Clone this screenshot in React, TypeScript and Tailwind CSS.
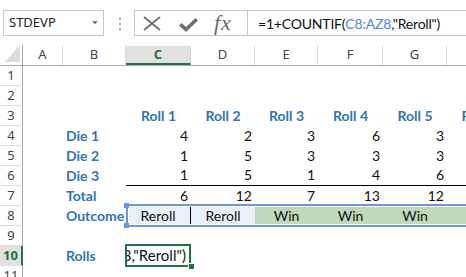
import React from "react";

const W = ["w-[40px]", "w-[63px]", "w-[65px]", "w-[64px]", "w-[63px]", "w-[65px]", "w-[64px]", "w-[64px]"];
const LETTERS = ["A", "B", "C", "D", "E", "F", "G", "H"];

type C = { t?: string; a?: "l" | "r" | "c"; h?: boolean; cls?: string };

const head = (t: string): C => ({ t, a: "c", h: true });
const lab = (t: string): C => ({ t, a: "l", h: true });
const num = (t: string): C => ({ t, a: "r" });

const ROWS: Record<number, C[]> = {
  3: [{}, {}, head("Roll 1"), head("Roll 2"), head("Roll 3"), head("Roll 4"), head("Roll 5"), head("Roll 6")],
  4: [{}, lab("Die 1"), num("4"), num("2"), num("3"), num("6"), num("3"), num("2")],
  5: [{}, lab("Die 2"), num("1"), num("5"), num("3"), num("3"), num("3"), num("4")],
  6: [
    {},
    lab("Die 3"),
    { ...num("1"), cls: "border-b border-black" },
    { ...num("5"), cls: "border-b border-black" },
    { ...num("1"), cls: "border-b border-black" },
    { ...num("4"), cls: "border-b border-black" },
    { ...num("6"), cls: "border-b border-black" },
    { ...num("5"), cls: "border-b border-black" },
  ],
  7: [{}, lab("Total"), num("6"), num("12"), num("7"), num("13"), num("12"), num("11")],
  8: [
    {},
    lab("Outcome"),
    { t: "Reroll", a: "c", cls: "bg-[#eaeffa] border-r border-black" },
    { t: "Reroll", a: "c", cls: "bg-[#eaeffa]" },
    { t: "Win", a: "c", cls: "bg-[#c0d9bb]" },
    { t: "Win", a: "c", cls: "bg-[#c0d9bb]" },
    { t: "Win", a: "c", cls: "bg-[#c0d9bb]" },
    { t: "Win", a: "c", cls: "bg-[#c0d9bb]" },
  ],
  10: [{}, lab("Rolls"), {}, {}, {}, {}, {}, {}],
};

function Cell({ c, i }: { c: C; i: number }) {
  const align = c.a === "r" ? "justify-end pr-[3px]" : c.a === "c" ? "justify-center" : "justify-start pl-[3px]";
  return (
    <div
      className={`${W[i]} shrink-0 h-[20px] flex items-end whitespace-nowrap ${align} ${
        c.h ? "font-bold text-[#2e75b6]" : "text-[#111]"
      } ${c.cls ?? ""}`}
    >
      <span className="leading-[20px]">{c.t ?? ""}</span>
    </div>
  );
}

function Row({ n }: { n: number }) {
  const cells = ROWS[n] ?? [{}, {}, {}, {}, {}, {}, {}, {}];
  const active = n === 10;
  return (
    <div className="relative flex h-[20px] shrink-0">
      <div
        className={`w-[23px] shrink-0 h-[20px] flex items-center justify-center font-['Noto_Sans',sans-serif] text-[13px] border-b border-b-[#dedede] ${
          active
            ? "bg-[#e1e1e1] border-r-2 border-r-[#217346] text-[#217346] font-bold"
            : "border-r border-r-[#ababab] text-[#444]"
        }`}
      >
        {n}
      </div>
      {cells.map((c, i) => (
        <Cell key={i} c={c} i={i} />
      ))}
      {n === 8 && (
        <div className="absolute left-[126px] top-[-2px] h-[23px] right-[-20px] border-2 border-[#6b96e2] shadow-[inset_0_0_0_1px_#ffffff]">
          <div className="absolute left-[-4px] top-[-3px] w-[5px] h-[5px] bg-[#6b96e2]" />
          <div className="absolute left-[-4px] top-[17px] w-[5px] h-[5px] bg-[#6b96e2]" />
        </div>
      )}
      {active && (
        <div className="absolute left-[125px] top-[-2px] w-[66px] h-[23px] border-2 border-[#217346] bg-white">
          <div className="h-full overflow-hidden flex items-end justify-end pr-[3px] whitespace-nowrap text-[#111] text-[15px]">
            <span className="leading-[20px] shrink-0">8,"Reroll")</span>
          </div>
          <div className="absolute left-[61px] top-[17px] w-[7px] h-[7px] bg-[#217346] border border-white" />
        </div>
      )}
    </div>
  );
}

export default function App() {
  return (
    <div className="w-[466px] h-[277px] overflow-hidden bg-white relative font-['Lato',sans-serif] text-[14px]">
      {/* top bar */}
      <div className="h-[45px] flex items-start pt-[10px]">
        <div className="ml-[3px] w-[101px] h-[26px] border border-[#c6c6c6] flex items-center justify-between pl-[5px] pr-[5px] font-['Noto_Sans',sans-serif] text-[13px] text-[#222]">
          <span>STDEVP</span>
          <svg width="6" height="4" viewBox="0 0 6 4">
            <polygon points="0,0 6,0 3,3.5" fill="#7a7a7a" />
          </svg>
        </div>
        <div className="ml-[15px] mt-[8px] flex flex-col gap-[3px]">
          <div className="w-[2px] h-[2px] bg-[#a8a8a8]" />
          <div className="w-[2px] h-[2px] bg-[#a8a8a8]" />
          <div className="w-[2px] h-[2px] bg-[#a8a8a8]" />
        </div>
        <div className="ml-[13px] flex-1 h-[26px] border border-[#c6c6c6] border-r-0 flex">
          <div className="w-[112px] h-full flex items-center">
            <svg className="ml-[8px]" width="18" height="15" viewBox="0 0 18 15">
              <path d="M1 1 L17 14 M17 1 L1 14" stroke="#6f6f6f" strokeWidth="1.8" fill="none" />
            </svg>
            <svg className="ml-[18px] mt-[3px]" width="19" height="14" viewBox="0 0 19 14">
              <path d="M0 7.5 L2.6 5 L7 9 L16.5 0 L19 2.5 L7 14 Z" fill="#707070" />
            </svg>
            <span className="ml-[16px] font-['Liberation_Serif',serif] italic text-[22px] leading-none text-[#6a6a6a] tracking-[1px]">
              fx
            </span>
          </div>
          <div className="flex-1 h-full border-l border-[#c6c6c6] pl-[10px] flex items-center whitespace-nowrap text-[#111] tracking-[-0.2px]">
            <span>=1+COUNTIF(</span>
            <span className="text-[#4f86dc]">C8:AZ8</span>
            <span>,"Reroll")</span>
          </div>
        </div>
      </div>

      {/* column headers */}
      <div className="flex h-[21px] font-['Noto_Sans',sans-serif] text-[13px] text-[#444]">
        <div className="w-[23px] shrink-0 h-full border-r border-r-[#ababab] border-b border-b-[#ababab] flex items-end justify-end">
          <svg width="16" height="18" viewBox="0 0 16 18" className="mb-[2px] mr-[1px]">
            <polygon points="15,0 15,17 0,17" fill="#dcdcdc" />
          </svg>
        </div>
        {LETTERS.map((l, i) =>
          i === 2 ? (
            <div key={l} className={`${W[i]} shrink-0 h-full pt-[1px] border-b border-b-[#ababab]`}>
              <div className="h-full bg-[#e1e1e1] border-b-2 border-b-[#217346] flex items-center justify-center font-bold text-[#217346] border-r border-r-[#d4d4d4]">
                {l}
              </div>
            </div>
          ) : (
            <div
              key={l}
              className={`${W[i]} shrink-0 h-full border-b border-b-[#ababab] flex items-center justify-center`}
            >
              <div className="flex-1 text-center">{l}</div>
              <div className="w-px h-full bg-[#dadada]" />
            </div>
          )
        )}
      </div>

      {/* rows */}
      <div className="flex flex-col">
        {[1, 2, 3, 4, 5, 6, 7, 8, 9, 10, 11].map((n) => (
          <Row key={n} n={n} />
        ))}
      </div>
    </div>
  );
}
